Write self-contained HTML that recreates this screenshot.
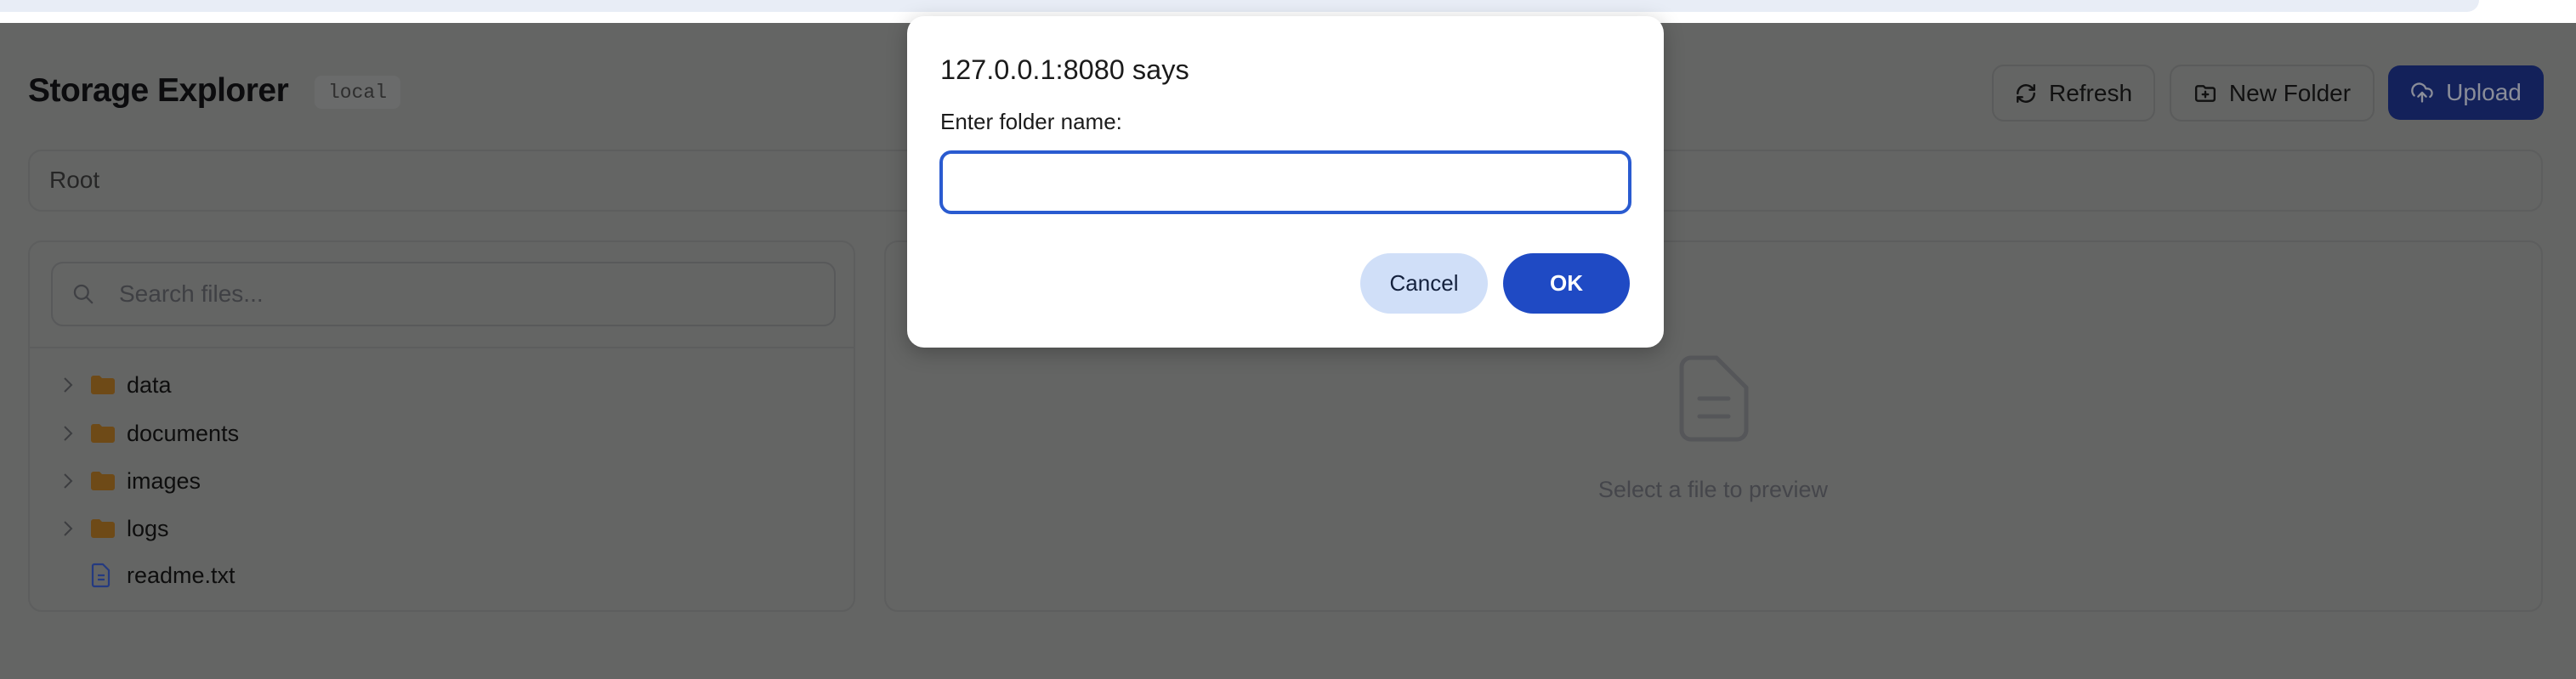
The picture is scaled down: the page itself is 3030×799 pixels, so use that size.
<!DOCTYPE html>
<html><head><meta charset="utf-8"><style>
*{box-sizing:border-box;margin:0;padding:0}
body{width:3030px;height:799px;background:#646564;font-family:"Liberation Sans",sans-serif;position:relative;overflow:hidden}
.abs{position:absolute}
.topstrip{left:0;top:0;width:3030px;height:27px;background:#fff}
.topstrip div{position:absolute;left:0;top:0;width:2916px;height:14px;background:#e8edf6;border-radius:0 0 30px 0}
.btn{position:absolute;border:2px solid #5a5b5b;border-radius:14px;color:#111;font-size:28px;display:flex;align-items:center;justify-content:center;gap:14px}
.box{position:absolute;border:2px solid #5d5e5e;border-radius:16px}
.row{position:absolute;left:0;height:40px;display:flex;align-items:center;font-size:27px;color:#0e0e0e}
.row .chev{position:absolute;left:74px;top:10px}
.row .ic{position:absolute;left:107px}
.row span{position:absolute;left:149px}
</style></head><body>
<div class="abs topstrip"><div></div></div>

<div class="abs" style="left:33px;top:85px;font-size:39px;font-weight:bold;color:#0c0c0e;letter-spacing:-0.5px">Storage Explorer</div>
<div class="abs" style="left:370px;top:89px;width:101px;height:39px;background:#6a6b6b;border-radius:8px;font-family:'Liberation Mono',monospace;font-size:23px;color:#2e2e2e;display:flex;align-items:center;justify-content:center">local</div>

<div class="btn" style="left:2343px;top:76px;width:192px;height:67px">
<svg width="26" height="26" viewBox="0 0 24 24" fill="none" stroke="#111" stroke-width="2.2" stroke-linecap="round" stroke-linejoin="round"><path d="M3 12a9 9 0 0 1 15-6.7L21 8"/><path d="M21 3v5h-5"/><path d="M21 12a9 9 0 0 1-15 6.7L3 16"/><path d="M8 16H3v5"/></svg>Refresh</div>
<div class="btn" style="left:2552px;top:76px;width:241px;height:67px">
<svg width="28" height="26" viewBox="0 0 24 24" fill="none" stroke="#111" stroke-width="2.2" stroke-linecap="round" stroke-linejoin="round"><path d="M4 20h16a2 2 0 0 0 2-2V8a2 2 0 0 0-2-2h-8L10 4H4a2 2 0 0 0-2 2v12a2 2 0 0 0 2 2z"/><path d="M12 10v6M9 13h6"/></svg>New Folder</div>
<div class="btn" style="left:2809px;top:77px;width:183px;height:64px;background:#13215a;border:none;color:#8a8d99">
<svg width="28" height="30" viewBox="0 0 24 24" fill="none" stroke="#8a8d99" stroke-width="2" stroke-linecap="round" stroke-linejoin="round"><path d="M4 14.9A7 7 0 1 1 15.7 8h1.8a4.5 4.5 0 0 1 2.5 8.2"/><path d="M12 12v9M8 16l4-4 4 4"/></svg>Upload</div>

<div class="box" style="left:33px;top:176px;width:2958px;height:73px"></div>
<div class="abs" style="left:58px;top:196px;font-size:28px;color:#262626">Root</div>

<div class="box" style="left:33px;top:283px;width:973px;height:437px">
  <div style="position:absolute;left:25px;top:23px;width:923px;height:76px;border:2px solid #58595a;border-radius:14px"></div>
  <div style="position:absolute;left:0;top:123px;width:969px;height:2px;background:#5d5e5e"></div>
</div>
<svg class="abs" style="left:84px;top:332px" width="27" height="27" viewBox="0 0 24 24" fill="none" stroke="#3f4044" stroke-width="2" stroke-linecap="round"><circle cx="10.5" cy="10.5" r="7"/><path d="M16 16l5.5 5.5"/></svg>
<div class="abs" style="left:140px;top:330px;font-size:28px;color:#3f4044">Search files...</div>

<div class="abs" style="left:0;top:433px;width:1000px;height:300px">
 <div class="row" style="top:0"><svg class="chev" width="12" height="20" viewBox="0 0 12 20" fill="none" stroke="#3c3d40" stroke-width="2"><path d="M2 2l8 8-8 8"/></svg><svg class="ic" width="28" height="22" viewBox="0 0 28 22"><path d="M0 3a3 3 0 0 1 3-3h7l3 3h12a3 3 0 0 1 3 3v13a3 3 0 0 1-3 3H3a3 3 0 0 1-3-3z" fill="#6e4a17"/></svg><span>data</span></div>
 <div class="row" style="top:57px"><svg class="chev" width="12" height="20" viewBox="0 0 12 20" fill="none" stroke="#3c3d40" stroke-width="2"><path d="M2 2l8 8-8 8"/></svg><svg class="ic" width="28" height="22" viewBox="0 0 28 22"><path d="M0 3a3 3 0 0 1 3-3h7l3 3h12a3 3 0 0 1 3 3v13a3 3 0 0 1-3 3H3a3 3 0 0 1-3-3z" fill="#6e4a17"/></svg><span>documents</span></div>
 <div class="row" style="top:113px"><svg class="chev" width="12" height="20" viewBox="0 0 12 20" fill="none" stroke="#3c3d40" stroke-width="2"><path d="M2 2l8 8-8 8"/></svg><svg class="ic" width="28" height="22" viewBox="0 0 28 22"><path d="M0 3a3 3 0 0 1 3-3h7l3 3h12a3 3 0 0 1 3 3v13a3 3 0 0 1-3 3H3a3 3 0 0 1-3-3z" fill="#6e4a17"/></svg><span>images</span></div>
 <div class="row" style="top:169px"><svg class="chev" width="12" height="20" viewBox="0 0 12 20" fill="none" stroke="#3c3d40" stroke-width="2"><path d="M2 2l8 8-8 8"/></svg><svg class="ic" width="28" height="22" viewBox="0 0 28 22"><path d="M0 3a3 3 0 0 1 3-3h7l3 3h12a3 3 0 0 1 3 3v13a3 3 0 0 1-3 3H3a3 3 0 0 1-3-3z" fill="#6e4a17"/></svg><span>logs</span></div>
 <div class="row" style="top:224px"><svg class="ic" width="24" height="30" viewBox="0 0 24 30" fill="none" stroke="#243a80" stroke-width="2.2" stroke-linejoin="round"><path d="M4 2h10l7 7v17a2 2 0 0 1-2 2H4a2 2 0 0 1-2-2V4a2 2 0 0 1 2-2z"/><path d="M8 15h8M8 20h8"/></svg><span>readme.txt</span></div>
</div>

<div class="box" style="left:1040px;top:283px;width:1951px;height:437px"></div>
<svg class="abs" style="left:1975px;top:418px" width="82" height="102" viewBox="0 0 82 102" fill="none" stroke="#555659" stroke-width="5" stroke-linecap="round" stroke-linejoin="round"><path d="M14 3h30l35 35v50a11 11 0 0 1-11 11H14A11 11 0 0 1 3 88V14A11 11 0 0 1 14 3z"/><path d="M24 51h34M24 72h34"/></svg>
<div class="abs" style="left:1715px;top:561px;width:600px;text-align:center;font-size:27px;color:#45464b">Select a file to preview</div>

<div class="abs" style="left:1067px;top:19px;width:890px;height:390px;background:#fff;border-radius:20px;box-shadow:0 6px 24px rgba(0,0,0,.25)">
  <div class="abs" style="left:39px;top:45px;font-size:32.5px;color:#1b1b1b;font-weight:500">127.0.0.1:8080 says</div>
  <div class="abs" style="left:39px;top:109px;font-size:26px;color:#1b1b1b">Enter folder name:</div>
  <div class="abs" style="left:38px;top:158px;width:814px;height:75px;border:4px solid #2a5bd0;border-radius:14px"></div>
  <div class="abs" style="left:533px;top:279px;width:150px;height:71px;background:#d0dff8;border-radius:36px;font-size:26px;color:#14213d;display:flex;align-items:center;justify-content:center">Cancel</div>
  <div class="abs" style="left:701px;top:279px;width:149px;height:71px;background:#1f4ac4;border-radius:36px;font-size:26px;color:#fff;font-weight:bold;display:flex;align-items:center;justify-content:center">OK</div>
</div>
</body></html>
